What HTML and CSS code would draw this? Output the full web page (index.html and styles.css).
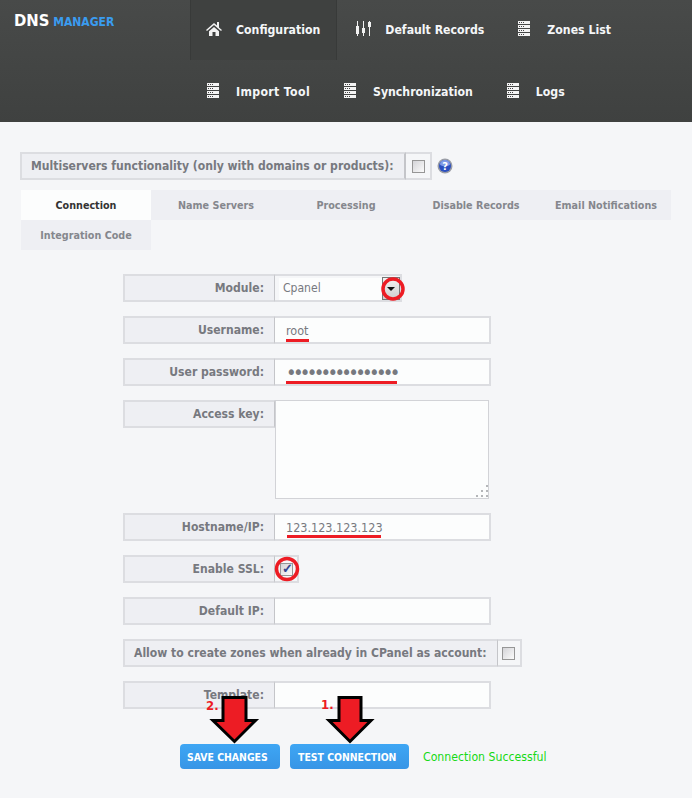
FILE: index.html
```html
<!DOCTYPE html>
<html lang="en">
<head>
  <meta charset="UTF-8" />
  <title>DNS Manager</title>
  <link rel="stylesheet" href="styles.css">
</head>
<body>

  <svg width="0" height="0" class="defs">
    <symbol id="server" viewBox="0 0 12 15">
      <path fill="#f4f4f4" d="M0 0h12v3H0zM0 4h12v3H0zM0 8h12v3H0zM0 12h12v3H0z"/>
      <path fill="#444" d="M1 1h1v1H1zM3 1h1v1H3zM5 1h1v1H5zM1 5h1v1H1zM3 5h1v1H3zM5 5h1v1H5zM1 9h1v1H1zM3 9h1v1H3zM5 9h1v1H5zM1 13h1v1H1zM3 13h1v1H3zM5 13h1v1H5z"/>
    </symbol>
  </svg>

  <header class="topbar">
    <div class="logo"><b>DNS</b> <span>MANAGER</span></div>
    <nav class="menu">
      <a class="menu-item active">
        <svg class="ico" width="16" height="15" viewBox="0 0 16 15"><path fill="#f2f2f2" d="M8 2 0 9l1 1 7-6 7 6 1-1-3-2.6V1h-2v3.600zM3 10.200 8 6l5 4.200V15H9.500v-4h-3v4H3z"/></svg>
        Configuration
      </a>
      <a class="menu-item">
        <svg class="ico" width="16" height="15" viewBox="0 0 16 15"><path fill="#f2f2f2" d="M2 0h1v5H2zM1 5h3v8H1zM2 13h1v2H2zM8 0h1v7H8zM7 7h3v5H7zM8 12h1v3H8zM14 0h1v1h-1zM13 1h3v5h-3zM14 6h1v9h-1z"/></svg>
        Default Records
      </a>
      <a class="menu-item">
        <svg class="ico server" width="12" height="15"><use href="#server"/></svg>
        Zones List
      </a>
      <a class="menu-item import">
        <svg class="ico server" width="12" height="15"><use href="#server"/></svg>
        Import Tool
      </a>
      <a class="menu-item">
        <svg class="ico server" width="12" height="15"><use href="#server"/></svg>
        Synchronization
      </a>
      <a class="menu-item">
        <svg class="ico server" width="12" height="15"><use href="#server"/></svg>
        Logs
      </a>
    </nav>
  </header>

  <main class="content">
    <div class="multi">
      <label class="multi-label">Multiservers functionality (only with domains or products):</label>
      <span class="check-cell"><input type="checkbox" class="check" /></span>
      <svg class="help" width="16" height="16" viewBox="0 0 16 16">
        <circle cx="8" cy="8" r="7.500" fill="#9a9da6"/>
        <circle cx="8" cy="8" r="6" fill="#2b4fc0"/>
        <path fill="#7f9be8" d="M3 6a5 4 0 0 1 10 0 5 2 0 0 1-10 0z"/>
        <text x="8" y="12" class="help-mark">?</text>
      </svg>
    </div>

    <div class="tabs">
      <a class="tab active">Connection</a>
      <a class="tab">Name Servers</a>
      <a class="tab">Processing</a>
      <a class="tab">Disable Records</a>
      <a class="tab">Email Notifications</a>
      <a class="tab">Integration Code</a>
    </div>

    <form class="form">
      <div class="row">
        <label class="row-label">Module:</label>
        <div class="select-box">
          <span>Cpanel</span>
          <span class="select-btn"></span>
        </div>
      </div>
      <div class="row">
        <label class="row-label">Username:</label>
        <input type="text" class="field" value="root" />
      </div>
      <div class="row">
        <label class="row-label">User password:</label>
        <input type="password" class="field pass" value="1234567890123456" />
      </div>
      <div class="row">
        <label class="row-label">Access key:</label>
        <div class="area-wrap">
          <textarea class="area"></textarea>
          <svg class="grip" width="12" height="12" viewBox="0 0 12 12"><path fill="#b4b6b9" d="M10 0h2v2h-2zM5 5h2v2H5zM10 5h2v2h-2zM0 10h2v2H0zM5 10h2v2H5zM10 10h2v2h-2z"/></svg>
        </div>
      </div>
      <div class="row">
        <label class="row-label">Hostname/IP:</label>
        <input type="text" class="field" value="123.123.123.123" />
      </div>
      <div class="row">
        <label class="row-label">Enable SSL:</label>
        <span class="check-cell"><input type="checkbox" class="check" checked /></span>
      </div>
      <div class="row">
        <label class="row-label">Default IP:</label>
        <input type="text" class="field" />
      </div>
      <div class="row">
        <label class="row-label wide">Allow to create zones when already in CPanel as account:</label>
        <span class="check-cell"><input type="checkbox" class="check" /></span>
      </div>
      <div class="row">
        <label class="row-label">Template:</label>
        <input type="text" class="field" />
      </div>
      <div class="actions">
        <button type="button" class="btn save">Save Changes</button>
        <button type="button" class="btn test">Test Connection</button>
        <span class="status">Connection Successful</span>
      </div>
    </form>
  </main>

  <!-- red markers drawn over the screenshot -->
  <svg class="marks" width="692" height="798" viewBox="0 0 692 798">
    <circle cx="393" cy="289" r="10" fill="none" stroke="#ed1c24" stroke-width="3.500"/>
    <circle cx="287" cy="569" r="10.500" fill="none" stroke="#ed1c24" stroke-width="3.500"/>
    <path stroke="#ed1c24" stroke-width="3" fill="none" d="M286 340.500h23M286 382.500h111M287 536.500h94"/>
    <path fill="#ed1c24" stroke="#000" stroke-width="3" d="M223 697.500h23v23h9.500l-21 21-21.500-21H223z"/>
    <path fill="#ed1c24" stroke="#000" stroke-width="3" d="M339 697.500h22v23h10l-21 21-21-21h10z"/>
    <text x="206" y="710" class="mark-num">2.</text>
    <text x="321" y="709" class="mark-num">1.</text>
  </svg>

</body>
</html>
```

FILE: styles.css
```css
body {
  margin: 0;
  background: #f5f6f8;
  font-family: 'DejaVu Sans Condensed', 'DejaVu Sans', sans-serif;
  color: #77797f;
  font-size: 12.070px;
  position: relative;
  height: 798px;
  overflow: hidden;
}
.defs {
  position: absolute;
}

/* top bar */
.topbar {
  height: 122px;
  background: linear-gradient(to bottom, #484a49, #3f4140);
  display: flex;
}
.logo {
  width: 190px;
  flex: none;
  padding: 11px 0 0 14px;
  box-sizing: border-box;
  font-size: 16.500px;
  color: #fff;
}
.logo span {
  margin-left: -1px;
  font-size: 12px;
  font-weight: bold;
  color: #3a9cf0;
}
.menu {
  display: flex;
  flex-wrap: wrap;
  gap: 2px;
  align-content: flex-start;
}
.menu-item {
  display: flex;
  align-items: center;
  height: 59px;
  padding: 0 16px 1px;
  color: #f4f6f8;
  font-size: 12.200px;
  font-weight: bold;
}
.menu-item.active {
  background: #3f4140;
  border-left: 1px solid #383a39;
  border-right: 1px solid #383a39;
  padding-left: 15px;
}
.menu-item.import {
  margin-left: 1px;
  letter-spacing: 0.360px;
}
.ico {
  margin-right: 14px;
  margin-top: -3px;
  flex: none;
}
.ico.server {
  margin-right: 17px;
}

/* page body */
.content {
  padding: 30px 20px 0;
}
.multi {
  display: flex;
  align-items: center;
}
.multi-label {
  height: 24px;
  line-height: 24px;
  padding: 0 9px;
  width: 364px;
  background: #eeeff3;
  border: 2px solid #dcdde1;
  border-right-color: #c4c5c9;
  font-weight: bold;
  white-space: nowrap;
}
.check-cell {
  width: 24px;
  height: 24px;
  border: 2px solid #dcdde1;
  border-left: 0;
  display: flex;
  align-items: center;
  justify-content: center;
}
.row .check-cell {
  width: 22px;
}
.check {
  appearance: none;
  width: 13px;
  height: 13px;
  margin: 0;
  border: 1px solid #969696;
  background: linear-gradient(135deg, #d4d4d8, #fbfbfb);
  position: relative;
}
.check:checked::after {
  content: "✓";
  position: absolute;
  left: 1px;
  top: -3px;
  color: #34468f;
  font-size: 13px;
  font-weight: bold;
}
.help {
  margin-left: 5px;
}
.help-mark {
  font-size: 11px;
  font-weight: bold;
  fill: #fff;
  text-anchor: middle;
}

/* tabs */
.tabs {
  margin: 10px 0 0 1px;
  display: grid;
  grid-template-columns: repeat(5, 130px);
  grid-auto-rows: 30px;
}
.tab {
  background: #eeeff3;
  display: flex;
  align-items: center;
  justify-content: center;
  font-size: 10.700px;
  font-weight: bold;
  color: #85878d;
}
.tab.active {
  background: #fcfdfd;
  color: #333;
}

/* form rows */
.form {
  margin: 24px 0 0 103px;
}
.row {
  display: flex;
  align-items: flex-start;
  margin-bottom: 14px;
}
.row-label {
  width: 139px;
  height: 24px;
  line-height: 24px;
  padding-right: 10px;
  flex: none;
  text-align: right;
  background: #eeeff3;
  border: 2px solid #dcdde1;
  border-right: 1px solid #c4c5c9;
  font-weight: bold;
  white-space: nowrap;
}
.row-label.wide {
  width: auto;
  padding: 0 10px 0 9px;
}
.field {
  width: 216px;
  height: 28px;
  box-sizing: border-box;
  margin: 0;
  padding: 0 11px;
  background: #fcfdfd;
  border: 2px solid #dcdde1;
  border-left: 0;
  outline: none;
  font-family: inherit;
  font-size: 12.500px;
  color: #77797f;
}
.field.pass {
  font-size: 20px;
  letter-spacing: -3.700px;
}
.select-box {
  width: 127px;
  height: 28px;
  box-sizing: border-box;
  border: 2px solid #dcdde1;
  border-left: 0;
  display: flex;
  align-items: center;
  justify-content: space-between;
  padding-left: 8px;
  background: #fcfdfd;
  box-shadow: inset 4px 2px 0 #f5f6f8;
}
.select-btn {
  width: 16px;
  height: 21px;
  align-self: flex-end;
  border: 1px solid #777;
  background: linear-gradient(to bottom, #f2f2f2, #cfcfcf);
  position: relative;
}
.select-btn::after {
  content: "";
  position: absolute;
  left: 4px;
  top: 9px;
  border: 4px solid transparent;
  border-top: 4px solid #111;
  border-bottom: 0;
}
.area-wrap {
  position: relative;
  height: 99px;
}
.area {
  display: block;
  width: 214px;
  height: 99px;
  margin: 0;
  box-sizing: border-box;
  background: #fcfdfd;
  border: 1px solid #d2d3d7;
  resize: none;
  outline: none;
}
.grip {
  position: absolute;
  right: 1px;
  bottom: 2px;
}

/* buttons */
.actions {
  display: flex;
  align-items: center;
  margin: 35px 0 0 57px;
}
.btn {
  height: 25px;
  padding: 0 0 0 7px;
  border: 0;
  border-radius: 4px;
  background: linear-gradient(to bottom, #3ea6f4, #3795e6);
  color: #fff;
  font-family: inherit;
  font-size: 10.400px;
  font-weight: bold;
  text-transform: uppercase;
  text-align: left;
}
.save {
  width: 100px;
  margin-right: 10px;
}
.test {
  width: 119px;
  padding-left: 8px;
}
.status {
  margin-left: 14px;
  color: #16d916;
  font-size: 12.200px;
}

/* markers */
.marks {
  position: absolute;
  left: 0;
  top: 0;
  pointer-events: none;
}
.mark-num {
  font-size: 13px;
  font-weight: bold;
  fill: #ed1c24;
}
```
